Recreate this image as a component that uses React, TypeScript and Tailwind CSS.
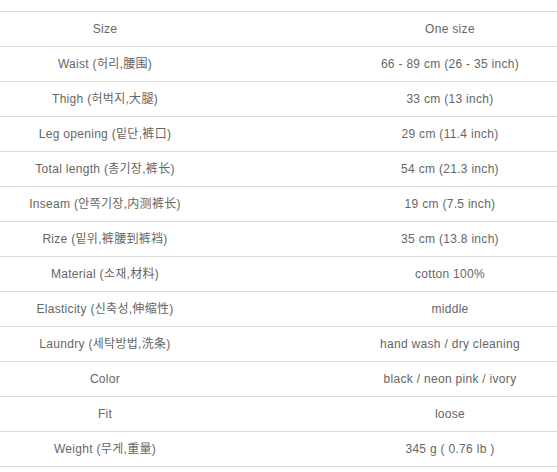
const ROWS: [string, string][] = [
  ["Size", "One size"],
  ["Waist (허리,腰围)", "66 - 89 cm (26 - 35 inch)"],
  ["Thigh (허벅지,大腿)", "33 cm (13 inch)"],
  ["Leg opening (밑단,裤口)", "29 cm (11.4 inch)"],
  ["Total length (총기장,裤长)", "54 cm (21.3 inch)"],
  ["Inseam (안쪽기장,内测裤长)", "19 cm (7.5 inch)"],
  ["Rize (밑위,裤腰到裤裆)", "35 cm (13.8 inch)"],
  ["Material (소재,材料)", "cotton 100%"],
  ["Elasticity (신축성,伸缩性)", "middle"],
  ["Laundry (세탁방법,洗条)", "hand wash / dry cleaning"],
  ["Color", "black / neon pink / ivory"],
  ["Fit", "loose"],
  ["Weight (무게,重量)", "345 g ( 0.76 lb )"],
];

export default function App() {
  return (
    <div className="h-[472px] w-[557px] overflow-hidden bg-white pt-[11px] text-[12px] tracking-[0.3px] text-[#666] [font-family:'Liberation_Sans','Noto_Sans_CJK_KR',sans-serif]">
      <div className="w-[690px] border-t border-[#ddd]">
        {ROWS.map(([label, value]) => (
          <div key={label} className="flex h-[35px] items-center border-b border-[#ddd]">
            <div className="w-[210px] text-center">{label}</div>
            <div className="w-[480px] text-center">{value}</div>
          </div>
        ))}
      </div>
    </div>
  );
}
